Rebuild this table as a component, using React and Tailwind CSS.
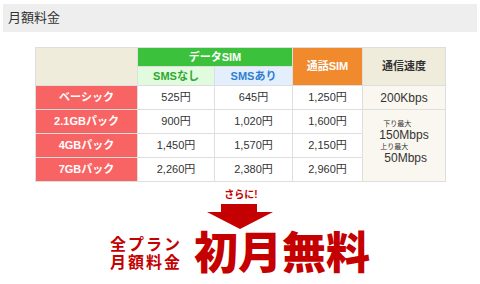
const rows = [
  { label: "ベーシック", a: "525円", b: "645円", c: "1,250円" },
  { label: "2.1GBパック", a: "900円", b: "1,020円", c: "1,600円" },
  { label: "4GBパック", a: "1,450円", b: "1,570円", c: "2,150円" },
  { label: "7GBパック", a: "2,260円", b: "2,380円", c: "2,960円" },
];

const App = () => {
  return (
    <div
      className="h-[284px] w-[480px] overflow-hidden bg-white text-[#333]"
      style={{ fontFamily: '"Liberation Sans", "Noto Sans CJK JP", sans-serif' }}
    >
      {/* Section title */}
      <div className="pt-[4px] pl-[3px] pr-[3px]">
        <h2 className="flex h-[28px] items-center bg-[#eeeeee] pl-[5px] text-[13px] text-[#333]">
          月額料金
        </h2>
      </div>

      {/* Price table */}
      <div className="pt-[15px] pl-[35px]">
        <table className="w-[410px] table-fixed border-collapse text-center text-[11px]">
          <colgroup>
            <col className="w-[102px]" />
            <col className="w-[77px]" />
            <col className="w-[78px]" />
            <col className="w-[70px]" />
            <col className="w-[83px]" />
          </colgroup>
          <thead>
            <tr className="h-[19px]">
              <th rowSpan={2} className="border border-[#dedede] bg-[#efecdc]"></th>
              <th colSpan={2} className="border border-[#dedede] bg-[#3bc13b] font-bold text-white">
                データSIM
              </th>
              <th rowSpan={2} className="border border-[#dedede] bg-[#f08a2c] font-bold text-white">
                通話SIM
              </th>
              <th rowSpan={2} className="border border-[#dedede] bg-[#efecdc] font-bold text-[#333]">
                通信速度
              </th>
            </tr>
            <tr className="h-[19px]">
              <th className="border border-[#dedede] bg-[#e1fbdf] font-bold text-[#2ea82e]">SMSなし</th>
              <th className="border border-[#dedede] bg-[#e3effc] font-bold text-[#2f7fd1]">SMSあり</th>
            </tr>
          </thead>
          <tbody>
            {rows.map((r, i) => (
              <tr key={r.label} className="h-[24px]">
                <th className="border border-[#dedede] bg-[#f86464] font-bold text-white">{r.label}</th>
                <td className="border border-[#dedede] bg-white">{r.a}</td>
                <td className="border border-[#dedede] bg-white">{r.b}</td>
                <td className="border border-[#dedede] bg-white">{r.c}</td>
                {i === 0 && (
                  <td className="border border-[#dedede] bg-[#faf7f0] text-[12px]">200Kbps</td>
                )}
                {i === 1 && (
                  <td rowSpan={3} className="border border-[#dedede] bg-[#faf7f0] pb-[4px]">
                    <div className="inline-block text-left leading-none">
                      <div className="pl-[4px] text-[7px]">下り最大</div>
                      <div className="mt-[2px] text-[12px]">150Mbps</div>
                      <div className="mt-[2px] pl-[1px] text-[7px]">上り最大</div>
                      <div className="mt-[2px] pl-[5px] text-[12px]">50Mbps</div>
                    </div>
                  </td>
                )}
              </tr>
            ))}
          </tbody>
        </table>
      </div>

      {/* Campaign */}
      <div className="flex flex-col items-center pt-[8px] text-[#c40000]">
        <div className="ml-[2px] text-[10px] font-bold leading-none">さらに!</div>
        <svg width="66" height="26" viewBox="0 0 66 26" className="mt-[4px]">
          <polygon points="14,0 50,0 50,8 66,8 33,25 0,8 14,8" fill="#c40000" />
        </svg>
        <div className="mt-[2px] flex items-center">
          <div className="flex flex-col text-[16px] font-bold leading-[18px] tracking-[2px]">
            <span>全プラン</span>
            <span>月額料金</span>
          </div>
          <div className="ml-[12px] text-[44px] font-black leading-none">初月無料</div>
        </div>
      </div>
    </div>
  );
};

export default App;
